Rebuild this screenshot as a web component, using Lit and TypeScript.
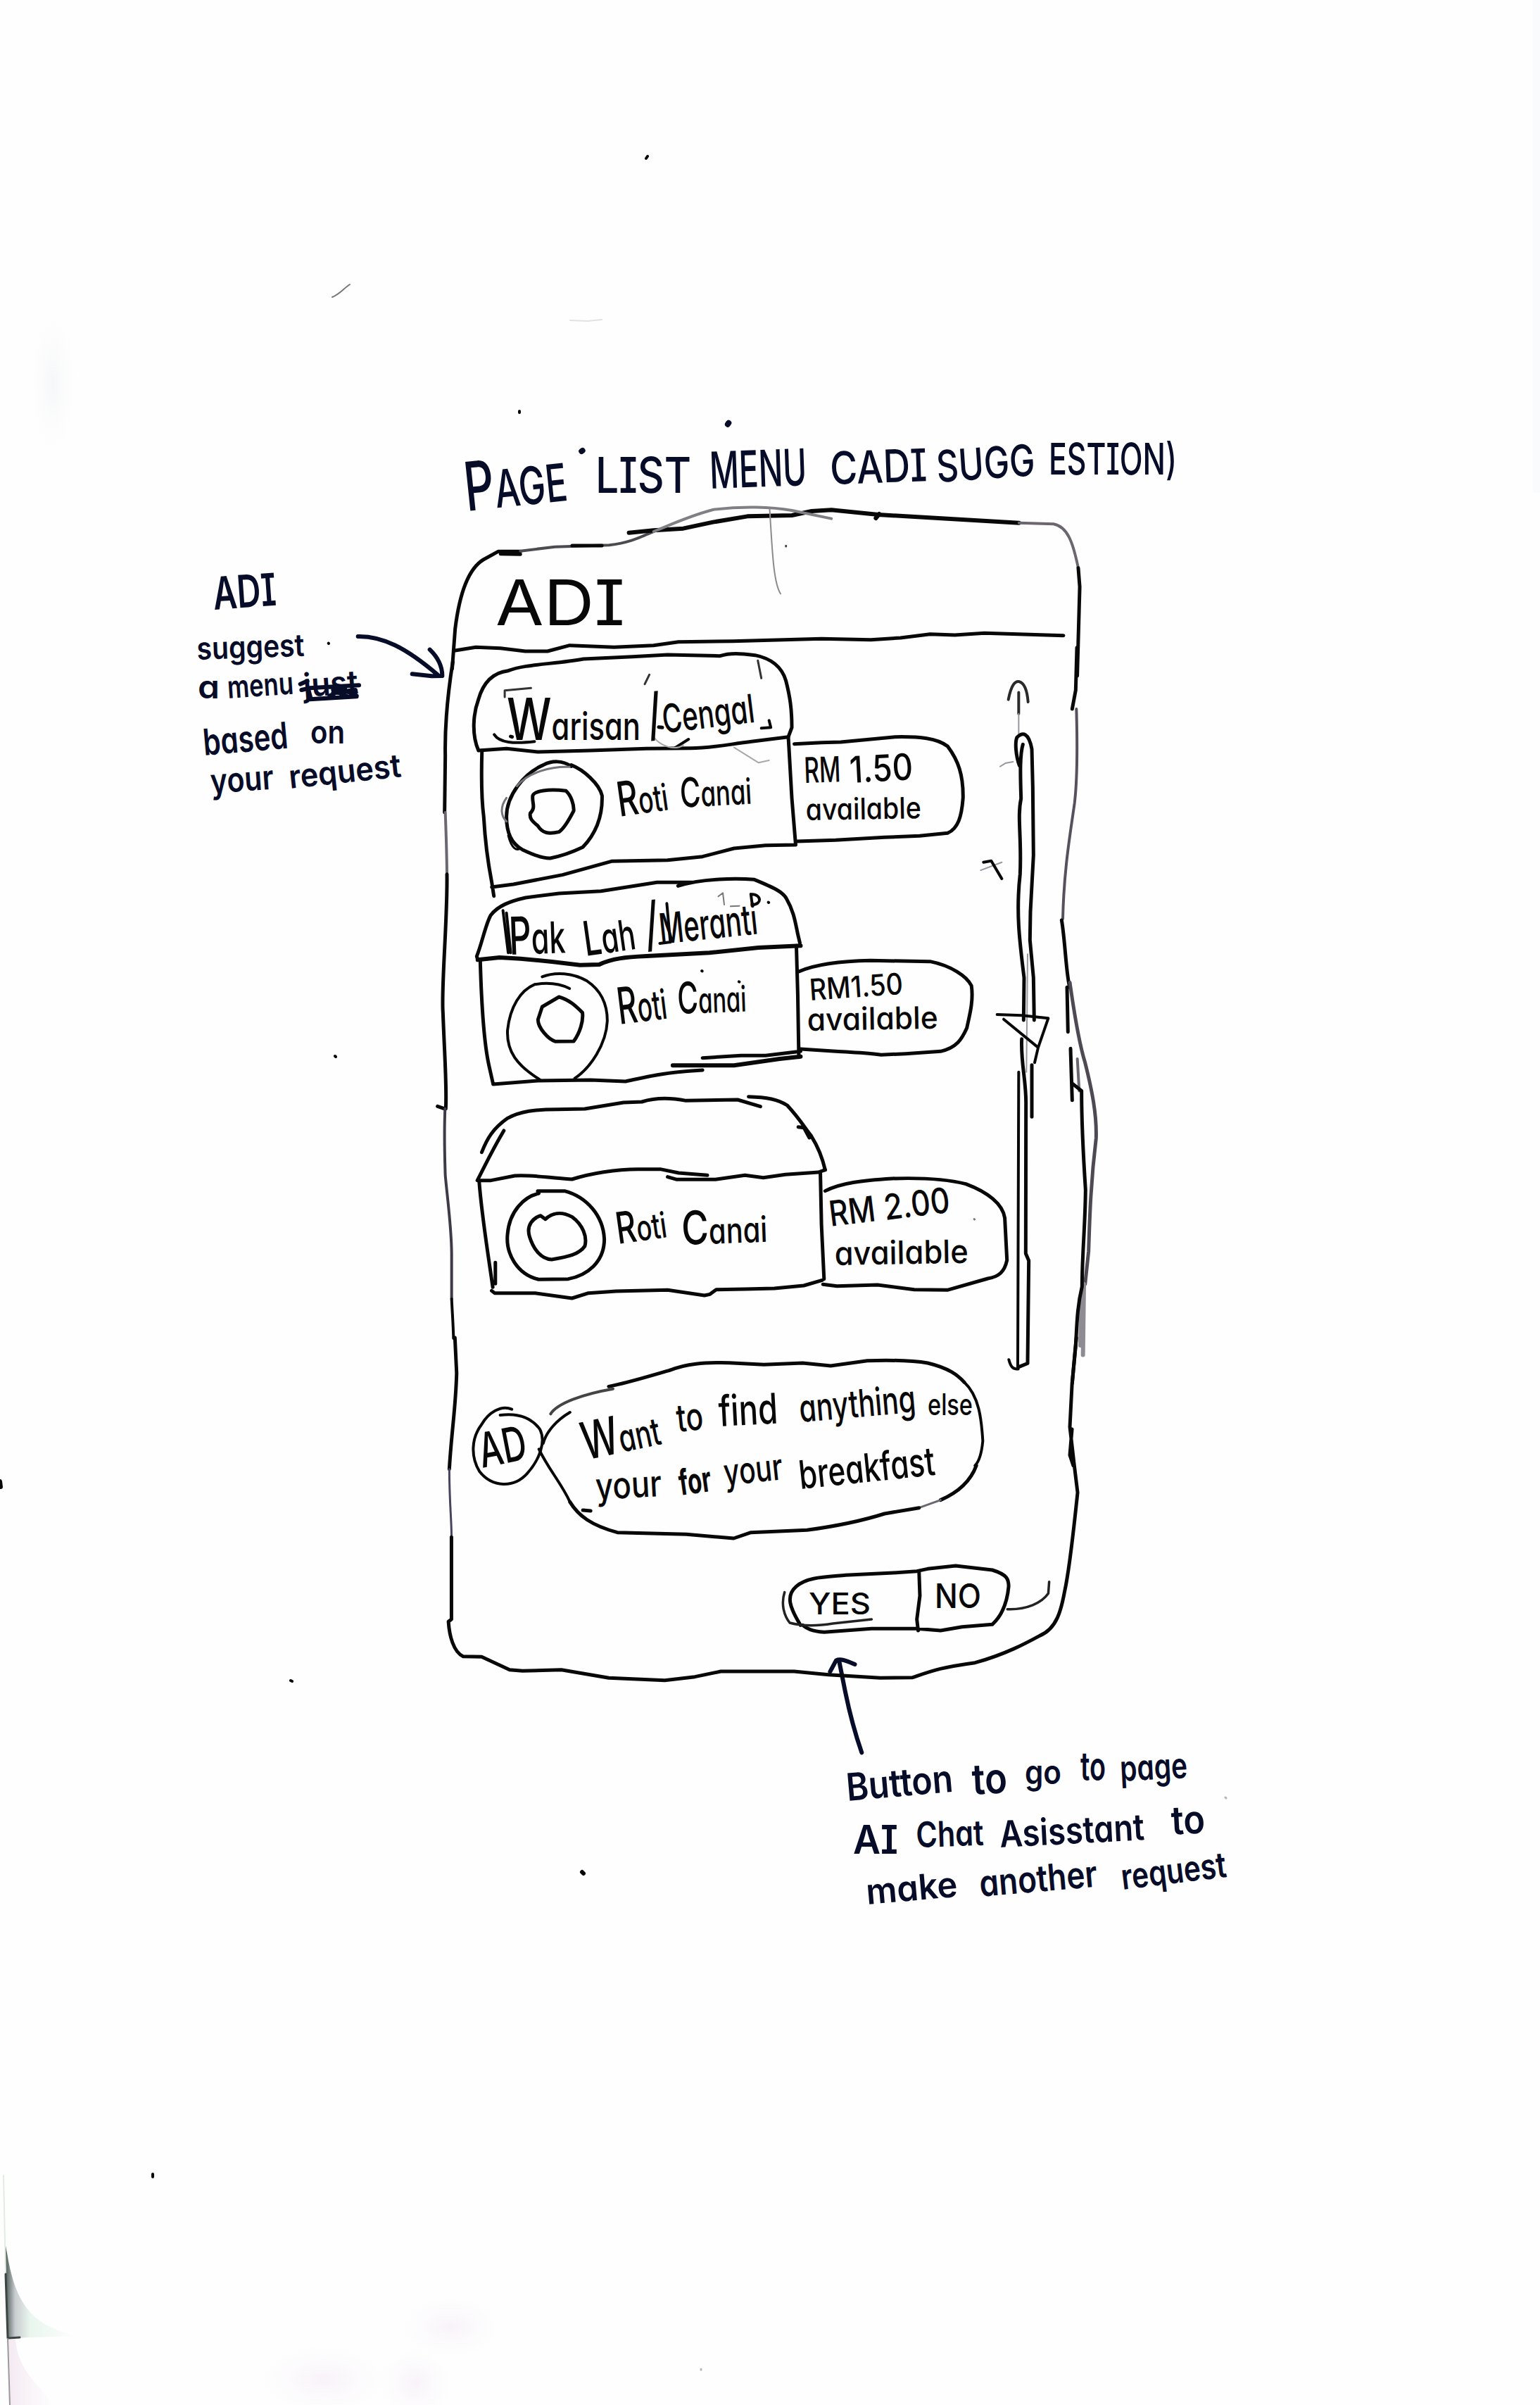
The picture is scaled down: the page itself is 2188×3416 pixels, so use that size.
import { LitElement, html, svg, css, nothing } from "lit";
import { customElement, property } from "lit/decorators.js";

type Frame = [number, number, number, number];

// Drawing frames: origin x, origin y, horizontal units per px, vertical units per px.
const TOP: Frame = [620, 560, 1.4255, 3];
const NOTE: Frame = [260, 780, 3, 3];
const CARD1: Frame = [640, 900, 2.0103, 3];
const CARD2: Frame = [640, 1230, 2.0103, 3];
const CARD3: Frame = [640, 1540, 1.9122, 3];
const RIGHT: Frame = [1360, 920, 3, 1.4933];
const LEFT: Frame = [600, 940, 3, 1.4255];
const CHAT: Frame = [620, 1900, 1.6333, 3];
const FOOT: Frame = [1150, 2330, 2.45, 3];
const PAGE: Frame = [0, 0, 1, 1];

const BLACK = "#080808";
const GREY = "#6b6670";
const NAVY = "#070c28";

const ink = (f: Frame, d: string, width = 5, color = BLACK) => svg`
  <path class="ink" d=${d} stroke=${color} stroke-width=${width}
    transform=${`translate(${f[0]} ${f[1]}) scale(${1 / f[2]} ${1 / f[3]})`}></path>`;

interface WordStyle { rot?: number; weight?: number; lead?: number; color?: string }

// One handwritten word: start x, baseline y, drawn width, font size.
const word = (t: string, x: number, y: number, w: number, size: number, s: WordStyle = {}) => svg`
  <text x=${x} y=${y} font-size=${size} textLength=${w} lengthAdjust="spacingAndGlyphs"
    font-weight=${s.weight ?? 460} fill=${s.color ?? BLACK}
    transform=${`rotate(${s.rot ?? 0} ${x} ${y})`}>${s.lead
      ? svg`<tspan font-size=${s.lead}>${t[0]}</tspan><tspan>${t.slice(1)}</tspan>`
      : t}</text>`;

const note = (t: string, x: number, y: number, w: number, size: number, rot = 0) =>
  word(t, x, y, w, size, { rot, weight: 580, color: NAVY });

@customElement("sketch-box")
class SketchBox extends LitElement {
  @property() box = "0 0 10 10";
  @property({ attribute: false }) art: unknown = nothing;

  static styles = css`
    :host { display: block; }
    .canvas {
      display: block; width: 100%; height: 100%; overflow: visible;
      font-family: Inter, "Open Sans", "Liberation Sans", sans-serif;
      font-feature-settings: "cv11", "cv08", "calt" 0;
    }
    .ink { fill: none; stroke-linecap: round; stroke-linejoin: round; vector-effect: non-scaling-stroke; }
  `;

  render() {
    return html`<svg class="canvas" viewBox=${this.box}>${this.art}</svg>`;
  }
}

@customElement("app-root")
class AppRoot extends LitElement {
  static styles = css`
    :host { display: block; }
    .page {
      position: relative; box-sizing: border-box; width: 2188px; height: 3416px;
      padding-top: 590px; overflow: hidden; background: #fefefe;
      display: flex; flex-direction: column; align-items: flex-start;
    }
    .paper { position: absolute; inset: 0; }
    .heading { position: relative; width: 1060px; height: 130px; margin-left: 640px; }
    .main { display: flex; align-items: flex-start; gap: 56px; padding-left: 280px; }
    .api-note { width: 300px; height: 340px; margin-top: 80px; }
    .phone { position: relative; width: 920px; height: 1665px; display: flex; flex-direction: column; }
    .frame { position: absolute; inset: 0; }
    .header { height: 210px; }
    .content { display: flex; gap: 30px; padding-left: 34px; height: 1015px; }
    .cards { display: flex; flex-direction: column; width: 710px; }
    .card { height: 310px; }
    .scroll { width: 80px; height: 1015px; }
    .chat { display: flex; padding-left: 34px; height: 260px; }
    .avatar { width: 105px; height: 260px; }
    .bubble { width: 630px; height: 260px; }
    .actions { width: 390px; height: 125px; margin-left: 474px; }
    .foot-note { width: 550px; height: 330px; margin-left: 1200px; }
  `;

  private paperArt = svg`
    <defs>
      <linearGradient id="edge" x1="0" x2="1"><stop offset="0" stop-color="#46554f"></stop><stop offset=".14" stop-color="#c9ccd0"></stop><stop offset=".35" stop-color="#e9f6ee"></stop><stop offset="1" stop-color="#fefefe"></stop></linearGradient>
      <linearGradient id="rose" x1="0" x2="1"><stop offset="0" stop-color="#f4eaf2"></stop><stop offset="1" stop-color="#fefefe"></stop></linearGradient>
      <radialGradient id="blot"><stop offset="0" stop-color="#f8f2f9"></stop><stop offset="1" stop-color="#fefefe" stop-opacity="0"></stop></radialGradient>
      <radialGradient id="mist"><stop offset="0" stop-color="#f6f7f9"></stop><stop offset="1" stop-color="#fefefe" stop-opacity="0"></stop></radialGradient>
    </defs>
    <path d="M7 3185 L11 3321 L110 3318 C60 3305 24 3290 10 3200 Z" fill="url(#edge)"></path>
    <path d="M11 3322 L14 3416 L75 3416 C60 3390 25 3370 22 3322 Z" fill="url(#rose)"></path>
    <ellipse cx="460" cy="3380" rx="110" ry="58" fill="url(#blot)"></ellipse>
    <ellipse cx="640" cy="3305" rx="85" ry="50" fill="url(#blot)"></ellipse>
    <ellipse cx="590" cy="3385" rx="60" ry="58" fill="url(#blot)"></ellipse>
    <ellipse cx="75" cy="545" rx="40" ry="130" fill="url(#mist)"></ellipse>
    <rect x="2178" y="0" width="10" height="700" fill="#f9fbfd"></rect>
    ${ink(PAGE, "M5 3090 L8 3230", 2, "#e3ebe3")}
    ${ink(PAGE, "M8 3230 L11 3321 L28 3320", 3, "#3b4642")}
    ${ink(PAGE, "M11 3322 L14 3416", 2, "#9a9a9e")}
    ${ink(PAGE, "M918 225 L920 222 M738 584 L738 586 M476 1500 L477 1501 M413 2387 L415 2388 M217 3088 L217 3092", 4)}
    ${ink(PAGE, "M827 2659 L829 2661 M0 2104 L1 2112", 6)}
    ${ink(PAGE, "M472 422 C482 418 488 410 497 404", 2, "#777")}
    ${ink(PAGE, "M810 455 L835 456 L855 454", 2, "#e2e2e2")}
    ${ink(PAGE, "M1741 2553 L1742 2554 M996 3365 L996 3366", 3, "#b5b5b5")}`;

  private headingArt = svg`
    ${word("PAGE", 663, 726, 146, 74, { rot: -6, weight: 500, color: NAVY, lead: 96 })}
    ${word("LIST", 846, 700, 136, 70, { weight: 500, color: NAVY })}
    ${word("MENU", 1009, 694, 138, 72, { rot: -2, weight: 500, color: NAVY })}
    ${word("CADI", 1180, 688, 138, 64, { rot: -2, weight: 500, color: NAVY })}
    ${word("SUGG", 1332, 685, 140, 62, { rot: -4, weight: 500, color: NAVY })}
    ${word("ESTION)", 1490, 674, 182, 62, { weight: 500, color: NAVY })}
    ${ink(TOP, "M294 243 L296 240 M590 128 L592 122", 8, NAVY)}`;

  private apiNoteArt = svg`
    ${note("ADI", 304, 866, 90, 64, -4)}
    ${note("suggest", 280, 937, 153, 44, -2)}
    ${note("a", 281, 992, 31, 46)}
    ${note("menu", 324, 992, 94, 44, -4)}
    ${note("just", 432, 990, 78, 46, -4)}
    ${note("based", 290, 1073, 121, 52, -5)}
    ${note("on", 441, 1056, 49, 46)}
    ${note("your", 300, 1127, 90, 48, -4)}
    ${note("request", 412, 1120, 160, 46, -6)}
    ${ink(NOTE, "M500 575 L530 562 M505 600 L540 592 L750 580 M540 640 L740 628 M535 600 L545 638 M640 600 L700 628 M650 585 L740 625 M625 625 L690 592 M640 612 L735 600", 6, NAVY)}
    ${ink(NOTE, "M746 372 C850 370 950 420 1085 535 M1052 428 C1085 460 1105 500 1105 540 L1060 541 L977 532", 6, NAVY)}
    ${ink(NOTE, "M620 401 L621 402", 4)}`;

  private frameArt = svg`
    ${ink(LEFT, "M130 0 C110 60 95 120 98 190 L95 305", 5)}
    ${ink(LEFT, "M98 305 C100 330 104 380 105 430", 4, GREY)}
    ${ink(LEFT, "M105 430 C108 520 80 660 88 710 C95 800 105 860 100 905 M65 900 L95 905", 5)}
    ${ink(LEFT, "M97 905 C92 960 96 1010 98 1040 C110 1100 125 1150 125 1200 L125 1290", 4, "#3f3a48")}
    ${ink(LEFT, "M125 1290 C128 1320 132 1345 133 1370", 4)}
    ${ink(CHAT, "M43 0 L47 150 C45 300 35 400 30 560", 5)}
    ${ink(CHAT, "M30 560 C30 700 36 800 35 850", 3, "#4a4360")}
    ${ink(CHAT, "M35 850 L35 1200 L28 1210 C30 1270 40 1340 62 1358 L105 1360 L170 1415 L200 1420 L290 1415 L400 1450 L530 1460 L600 1445 L660 1422 L830 1422 L910 1436 L1030 1450 L1105 1448 C1150 1420 1170 1405 1250 1385 C1320 1350 1370 1300 1400 1270 C1440 1240 1450 1160 1458 1080 C1470 980 1480 800 1488 660 L1480 540 L1470 380 L1475 200 L1485 0 M1475 390 L1470 500 L1478 545", 5)}
    ${ink(TOP, "M32 1170 L38 1000 C45 880 60 750 95 705 L125 670 L170 670 M130 680 L170 682", 5)}
    ${ink(TOP, "M170 668 L240 650 L350 643 C400 630 420 600 440 585", 4, "#4d4a50")}
    ${ink(TOP, "M275 645 L335 645", 5)}
    ${ink(TOP, "M390 590 L440 580 L500 572 L560 545 L630 520 L720 516 L760 498 L800 493 L895 513 L1180 548 M890 528 L897 510", 6)}
    ${ink(TOP, "M440 585 C470 560 510 520 560 492 C620 475 680 480 720 495 L800 530", 4, "#827f84")}
    ${ink(TOP, "M1180 548 L1250 553 C1280 565 1290 640 1300 740", 4, GREY)}
    ${ink(TOP, "M1300 740 L1303 820 L1298 1200", 5)}
    ${ink(TOP, "M675 490 C680 650 682 800 697 850", 2, "#8d8a8e")}
    ${ink(TOP, "M708 646 L708 648", 3, "#444")}
    ${ink(RIGHT, "M510 0 L505 90 L490 130", 5)}
    ${ink(RIGHT, "M508 130 C512 200 512 280 500 330 C480 400 455 470 450 575", 4, "#57515e")}
    ${ink(RIGHT, "M445 578 C460 620 465 700 480 720 M468 720 L472 815 M483 850 L490 960", 5)}
    ${ink(RIGHT, "M480 710 C500 780 520 840 545 880 C575 940 595 990 592 1040 C570 1130 565 1200 560 1280 L545 1350", 5, "#4f4954")}
    ${ink(RIGHT, "M540 1350 L536 1500 M530 1370 L525 1480", 6, "#8f8b93")}
    ${ink(RIGHT, "M512 872 L520 940", 4, GREY)}
    ${ink(RIGHT, "M492 925 L530 940 C530 1000 535 1060 547 1150 C545 1230 532 1290 532 1355 C510 1400 510 1440 505 1480 L490 1560", 5)}`;

  private headerArt = svg`
    ${word("ADI", 704, 888, 184, 90, { weight: 370 })}
    ${ink(TOP, "M38 1092 L80 1078 L130 1082 L180 1095 L225 1095 L270 1070 L360 1078 L440 1070 L490 1055 L600 1052 L780 1042 L880 1046 L940 1038 L1000 1022 L1050 1026 L1110 1018 L1270 1028", 5)}`;

  private card1 = svg`
    ${ink(CARD1, "M80 498 C60 430 65 340 80 280 C95 200 125 165 165 158 C210 130 300 130 380 108 L520 98 L620 90 L770 95 C800 80 830 85 870 92 C930 110 950 160 958 200 C970 270 975 320 975 400 L965 440 L860 460 C800 470 740 490 680 488 L560 490 L400 498 L250 504 L160 490 L80 498", 5)}
    ${ink(CARD1, "M90 498 C88 600 88 700 95 780 C98 860 105 960 118 1060 L124 1118 M965 440 L975 700 L986 900 M118 1080 L180 1068 L320 1028 L460 970 L620 965 L720 950 L810 915 L900 902 L985 900", 5)}
    ${ink(CARD1, "M982 470 L1060 464 L1115 462 L1270 440 C1340 438 1390 445 1420 480 C1450 540 1465 600 1464 700 C1460 780 1450 830 1420 850 L1340 862 L1240 868 L1100 880 L990 885", 5)}
    ${ink(CARD1, "M345 565 C320 540 290 540 265 560 C210 595 160 690 160 780 C160 860 180 900 205 920 C240 945 270 958 285 957 C310 950 350 930 378 910 C410 860 435 790 433 690 C425 640 380 580 345 560 M235 690 C240 670 280 660 330 670 C345 690 353 730 352 755 C340 790 325 830 310 845 C280 855 262 850 250 820 C235 800 225 790 228 765 C245 740 232 720 235 690Z", 5)}
    ${ink(CARD1, "M165 860 C175 920 190 925 200 915 L180 885", 3)}
    ${ink(CARD1, "M340 568 C290 565 220 590 190 650 M160 700 C140 740 145 780 160 800", 3, "#77737a")}
    ${ink(CARD1, "M155 270 L155 242 L230 232 M555 215 L568 175 M878 115 L888 190", 3, "#333")}
    ${ink(CARD1, "M125 430 C140 465 180 470 240 460 M640 488 L680 450 M888 403 L915 400 L910 370", 4)}
    ${ink(CARD1, "M580 440 C600 480 640 500 665 475 M810 485 L880 550 L910 540", 2, "#aaa6ac")}
    ${ink(CARD1, "M172 438 L176 440 M595 398 L605 400", 5)}
    ${word("Warisan", 720, 1051, 190, 54, { lead: 82 })}
    ${word("/Cengal", 923, 1044, 152, 56, { rot: -7, lead: 80 })}
    ${word("Roti", 880, 1160, 72, 52, { rot: -8, lead: 68 })}
    ${word("Canai", 967, 1147, 102, 50, { rot: -3, lead: 58 })}
    ${word("RM", 1143, 1112, 52, 50, { rot: -2 })}
    ${word("1.50", 1208, 1112, 90, 52, { rot: -3 })}
    ${word("available", 1145, 1165, 164, 42, { rot: -1 })}`;

  private card2 = svg`
    ${ink(CARD2, "M78 400 L75 385 C90 330 100 250 115 210 C135 170 170 150 215 135 L310 117 L430 107 L590 70 L690 70 M650 85 C720 52 820 52 868 58 C920 90 950 110 960 140 C980 190 985 240 992 290 L998 328", 5)}
    ${ink(CARD2, "M78 400 L140 390 L200 395 L290 408 L370 422 L425 420 C460 395 500 388 560 384 L740 370 L880 348 L1000 340", 6)}
    ${ink(CARD2, "M85 400 C88 560 95 750 110 850 L122 930 M988 340 L992 550 L995 815 M122 930 L250 915 L400 912 L500 918 C560 900 600 880 720 870 M720 818 L830 808 L900 808 L1000 790", 5)}
    ${ink(CARD2, "M635 850 L810 850 L940 822 L1000 812", 6)}
    ${ink(CARD2, "M995 450 C1050 415 1120 405 1200 403 L1370 407 C1430 425 1475 470 1488 510 C1495 580 1480 650 1475 690 C1460 740 1445 775 1400 790 L1300 800 L1230 805 C1190 795 1150 795 1100 790 L1000 780", 5)}
    ${ink(CARD2, "M262 472 C300 450 350 455 390 490 C430 530 448 590 448 660 C445 760 400 860 355 905 M255 910 C190 850 160 790 163 700 C170 600 200 530 240 505 C280 495 310 500 340 522", 4)}
    ${ink(CARD2, "M310 558 C340 570 360 600 377 625 C380 660 370 710 352 747 L300 748 C280 740 250 690 250 655 L262 600 Z", 5)}
    ${ink(CARD2, "M150 190 L165 370 M160 200 L172 370 M618 160 L628 325 M598 330 L625 325", 4)}
    ${ink(CARD2, "M765 130 L778 115 L782 165 M800 172 L825 170", 2, "#777")}
    ${ink(CARD2, "M858 120 L862 165 C890 165 890 120 858 120 M908 155 L909 156 M718 447 L719 448 M824 493 L825 494", 4)}
    ${word("Pak", 724, 1356, 80, 62, { rot: -2, lead: 74 })}
    ${word("Lah", 832, 1358, 74, 60, { rot: -8, lead: 68 })}
    ${word("/Meranti", 919, 1343, 160, 60, { rot: -6, lead: 84 })}
    ${word("Roti", 880, 1455, 70, 58, { rot: -7, lead: 72 })}
    ${word("Canai", 963, 1440, 98, 50, { rot: -2, lead: 62 })}
    ${word("RM1.50", 1151, 1421, 133, 42, { rot: -4 })}
    ${word("available", 1147, 1464, 186, 44, { rot: -1 })}`;

  private card3 = svg`
    ${ink(CARD3, "M85 290 C100 230 115 190 155 145 C190 115 230 107 290 107 L365 105 L470 78 L520 75 C560 55 600 58 640 70 L780 66 L842 95 M810 53 C860 55 890 65 915 90 C950 150 960 180 980 220 C1000 270 1010 310 1018 365 M945 182 L960 185 L975 228", 5)}
    ${ink(CARD3, "M145 198 C110 290 90 360 73 410 L110 410 L175 390 C220 385 260 398 330 405 C380 380 450 362 510 362 L570 362 L620 378 L698 388 M590 395 L615 406 L720 406 L800 388 L850 398 L910 385 L1000 375 L1018 365", 5)}
    ${ink(CARD3, "M78 415 C85 560 100 700 115 865 M122 760 L122 850 M1005 380 L1008 600 L1015 830 M112 880 L120 890 L230 890 L330 912 L375 890 L450 882 L590 877 L690 900 L705 895 L722 875 L800 873 L880 870 L960 858 L1010 835", 5)}
    ${ink(CARD3, "M1018 455 C1060 420 1120 410 1200 402 C1280 398 1350 405 1400 425 C1460 460 1500 510 1506 570 L1512 750 C1505 800 1490 820 1460 828 L1350 877 L1260 875 L1160 855 L1050 860 L1012 853", 5)}
    ${ink(CARD3, "M237 455 L310 455 C370 480 415 560 418 660 C418 760 370 815 320 830 L240 832 C180 810 150 720 155 640 C160 540 200 480 240 465 M258 575 C275 550 300 540 330 565 C360 600 372 650 365 690 C350 725 320 735 275 747 C245 745 225 700 215 650 C205 600 225 570 245 560 L258 575", 5)}
    ${ink(CARD3, "M1423 575 L1424 576", 3, "#777")}
    ${word("Roti", 878, 1767, 72, 50, { rot: -8, lead: 62 })}
    ${word("Canai", 969, 1768, 122, 50, { rot: -2, lead: 66 })}
    ${word("RM", 1180, 1742, 66, 50, { rot: -7 })}
    ${word("2.00", 1258, 1733, 94, 50, { rot: -7 })}
    ${word("available", 1186, 1797, 190, 46, { rot: -1 })}`;

  private scrollArt = svg`
    ${ink(RIGHT, "M218 110 C230 80 245 70 265 72 C285 75 298 90 302 115 M262 95 L262 140", 4, "#2a2a2a")}
    ${ink(RIGHT, "M262 140 L262 185 M183 252 L205 245 L238 242 M300 650 L295 900 M100 472 L190 455", 2, "#9a969e")}
    ${ink(RIGHT, "M265 250 C250 230 245 200 255 190 C280 178 305 180 318 215 L322 295 L325 440 L312 560 L310 620 L325 700 L328 790 M280 205 C265 230 270 280 272 320 C255 360 275 400 268 480 C250 560 265 620 285 700 L283 790", 5)}
    ${ink(RIGHT, "M170 778 L275 780 L388 786 L345 848 L198 788 M345 848 L330 880", 4)}
    ${ink(RIGHT, "M275 830 C270 880 295 920 293 970 L292 1285 L305 1300 L300 1518 L260 1526 M318 885 L318 995", 5)}
    ${ink(RIGHT, "M262 900 L258 1525 M220 1510 C230 1530 245 1530 260 1530 M112 455 L145 452 L190 490", 4)}`;

  private avatarArt = svg`
    ${ink(CHAT, "M175 305 C150 285 120 320 105 370 C80 430 80 510 100 570 C130 640 180 640 210 580 C240 520 255 440 240 390 C220 340 190 320 148 330", 4)}
    ${word("AD", 685, 2085, 68, 68, { rot: -11 })}`;

  private bubbleArt = svg`
    ${ink(CHAT, "M265 325 C280 280 340 240 410 218", 4, "#444")}
    ${ink(CHAT, "M400 208 C450 190 500 160 540 140 C580 110 620 105 680 107 L760 115 L850 108 L915 120 L1000 98 C1060 95 1110 98 1140 108 C1190 130 1210 160 1225 190", 5)}
    ${ink(CHAT, "M1225 190 C1260 250 1265 350 1268 440 C1265 500 1258 530 1250 545 M310 318 C280 350 255 400 248 450 M310 700 C290 620 260 560 238 475", 4)}
    ${ink(CHAT, "M1253 545 C1240 610 1210 660 1170 692", 5)}
    ${ink(CHAT, "M1170 692 L1120 725", 3, GREY)}
    ${ink(CHAT, "M1120 725 L1040 750 C980 785 920 805 860 820 L730 830 L690 855 L580 838 L420 830 C360 800 330 760 310 700 M340 735 L358 738", 5)}
    ${word("Want", 832, 2074, 112, 54, { rot: -12, lead: 74 })}
    ${word("to", 963, 2034, 38, 54, { rot: -6 })}
    ${word("find", 1022, 2026, 84, 60, { rot: -3 })}
    ${word("anything", 1137, 2020, 166, 54, { rot: -5 })}
    ${word("else", 1318, 2010, 64, 42)}
    ${word("your", 847, 2130, 94, 52, { rot: -3 })}
    ${word("for", 967, 2124, 46, 50, { rot: -8, weight: 700 })}
    ${word("your", 1030, 2110, 84, 52, { rot: -6 })}
    ${word("breakfast", 1137, 2115, 194, 56, { rot: -6 })}`;

  private actionsArt = svg`
    ${ink(CHAT, "M845 1225 C820 1150 810 1100 835 1060 C860 1020 900 1020 950 1012 L1060 1002 L1115 995 L1140 985 L1205 972 L1290 990 C1325 1010 1328 1030 1328 1060 C1325 1120 1315 1180 1290 1222 L1220 1232 L1170 1248 L1115 1240 L1010 1240 L900 1255 C870 1250 860 1240 850 1225 M1120 995 L1122 1100 L1115 1200 L1118 1248", 5)}
    ${ink(CHAT, "M808 1085 C800 1130 805 1180 820 1215 C850 1230 880 1230 920 1218 L1010 1200 M1325 1157 C1370 1160 1405 1130 1420 1090 L1422 1040", 3.5, "#222")}
    ${word("YES", 1149, 2293, 88, 42)}
    ${word("NO", 1328, 2284, 66, 48)}`;

  private footNoteArt = svg`
    ${ink(FOOT, "M72 133 L93 85 C110 75 135 90 158 102 M103 85 L125 220 C140 310 160 400 182 478", 6, NAVY)}
    ${note("Button", 1204, 2558, 152, 54, -5)}
    ${note("to", 1382, 2549, 50, 60, -3)}
    ${note("go", 1456, 2534, 52, 48)}
    ${note("to", 1535, 2529, 36, 56)}
    ${note("page", 1592, 2530, 96, 50, -3)}
    ${note("AI", 1212, 2633, 64, 56)}
    ${note("Chat", 1302, 2624, 96, 50, -2)}
    ${note("Asisstant", 1421, 2624, 206, 52, -3)}
    ${note("to", 1665, 2606, 48, 56, -3)}
    ${note("make", 1232, 2705, 130, 50, -5)}
    ${note("another", 1393, 2694, 168, 52, -5)}
    ${note("request", 1595, 2684, 150, 50, -7)}`;

  render() {
    return html`
      <div class="page">
        <sketch-box class="paper" box="0 0 2188 3416" .art=${this.paperArt}></sketch-box>
        <sketch-box class="heading" box="640 590 1060 130" .art=${this.headingArt}></sketch-box>
        <div class="main">
          <sketch-box class="api-note" box="280 800 300 340" .art=${this.apiNoteArt}></sketch-box>
          <div class="phone">
            <sketch-box class="frame" box="636 720 920 1665" .art=${this.frameArt}></sketch-box>
            <sketch-box class="header" box="636 720 920 210" .art=${this.headerArt}></sketch-box>
            <div class="content">
              <div class="cards">
                <sketch-box class="card" box="670 930 710 310" .art=${this.card1}></sketch-box>
                <sketch-box class="card" box="670 1240 710 310" .art=${this.card2}></sketch-box>
                <sketch-box class="card" box="670 1550 710 310" .art=${this.card3}></sketch-box>
              </div>
              <sketch-box class="scroll" box="1410 930 80 1015" .art=${this.scrollArt}></sketch-box>
            </div>
            <div class="chat">
              <sketch-box class="avatar" box="670 1945 105 260" .art=${this.avatarArt}></sketch-box>
              <sketch-box class="bubble" box="775 1945 630 260" .art=${this.bubbleArt}></sketch-box>
            </div>
            <sketch-box class="actions" box="1110 2205 390 125" .art=${this.actionsArt}></sketch-box>
          </div>
        </div>
        <sketch-box class="foot-note" box="1200 2385 550 330" .art=${this.footNoteArt}></sketch-box>
      </div>`;
  }
}
